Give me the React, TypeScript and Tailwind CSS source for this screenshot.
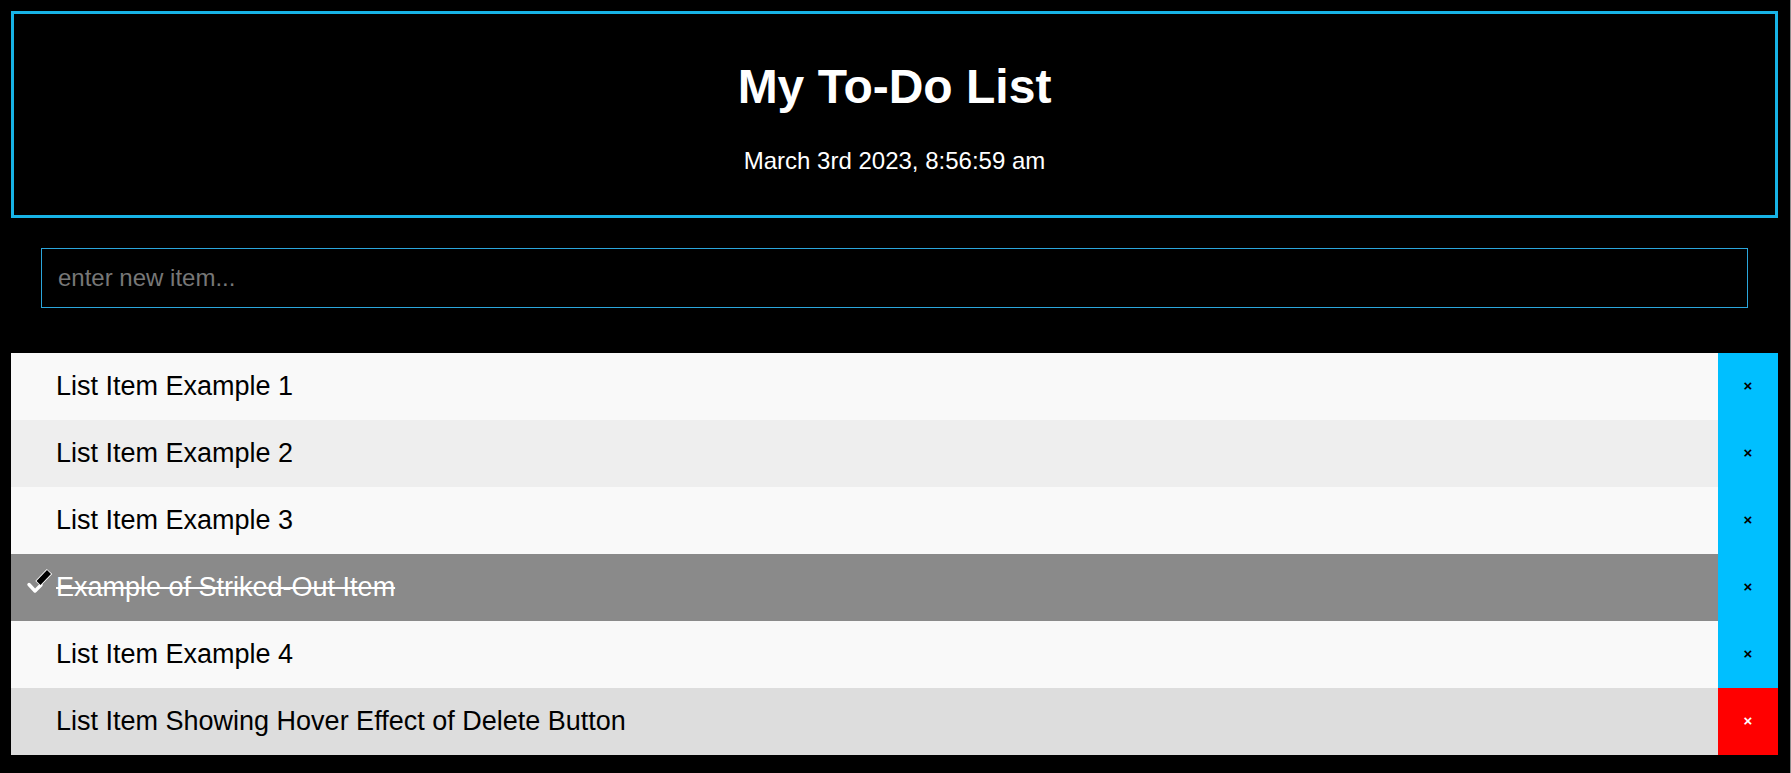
import { useState } from "react"

type Item = { id: number; text: string; done: boolean }

const initialItems: Item[] = [
  { id: 1, text: "List Item Example 1", done: false },
  { id: 2, text: "List Item Example 2", done: false },
  { id: 3, text: "List Item Example 3", done: false },
  { id: 4, text: "Example of Striked-Out Item", done: true },
  { id: 5, text: "List Item Example 4", done: false },
  { id: 6, text: "List Item Showing Hover Effect of Delete Button", done: false },
]

// white tick with a black marker tip, as drawn before a checked item
function CheckIcon() {
  return (
    <svg className="absolute left-[13px] top-[12px]" width="30" height="30" viewBox="0 0 30 30">
      <polyline points="5,18.5 11,25 17,19" fill="none" stroke="#fff" strokeWidth="3.4" strokeLinecap="round" strokeLinejoin="round" />
      <line x1="14" y1="17.5" x2="25.5" y2="5.5" stroke="#fff" strokeWidth="7.5" />
      <line x1="14.5" y1="17" x2="25" y2="6" stroke="#000" strokeWidth="5.5" />
    </svg>
  )
}

export default function App() {
  const [items, setItems] = useState<Item[]>(initialItems)
  const [value, setValue] = useState("")

  const rowBg = (item: Item, index: number) => {
    if (item.done) return "bg-[#8a8a8a]"
    if (index === 5) return "bg-[#dddddd]"
    return index % 2 === 0 ? "bg-[#f9f9f9]" : "bg-[#eeeeee]"
  }

  return (
    <div
      className="min-h-screen bg-black border-r border-[#8c8c8c] pl-[11px] pr-[12px] pt-[11px] pb-[18px]"
      style={{ fontFamily: '"Liberation Sans", Arial, sans-serif' }}
    >
      {/* Header */}
      <div className="border-[3px] border-[#17b3e6] pt-[49px] pb-[42px] text-center text-white">
        <h1 className="text-[48px] leading-[48px] font-bold">My To-Do List</h1>
        <div className="mt-[38px] text-[24px] leading-[24px]">March 3rd 2023, 8:56:59 am</div>
      </div>

      {/* New item */}
      <div className="mx-[30px] mt-[30px]">
        <input
          value={value}
          onChange={(e) => setValue(e.target.value)}
          placeholder="enter new item..."
          className="block h-[60px] w-full border border-[#2ba6dc] bg-black px-4 text-[24px] text-white outline-none placeholder:text-[#777777]"
        />
      </div>

      {/* List */}
      <ul className="mt-[45px]">
        {items.map((item, index) => (
          <li key={item.id} className={`relative flex h-[67px] items-center ${rowBg(item, index)}`}>
            {item.done && <CheckIcon />}
            <span
              className={`flex-1 pl-[45px] text-[27px] leading-none ${
                item.done ? "text-white line-through" : "text-black"
              }`}
            >
              {item.text}
            </span>
            <button
              onClick={() => setItems(items.filter((i) => i.id !== item.id))}
              className={`flex h-full w-[60px] items-center justify-center text-[15px] font-bold ${
                index === 5 ? "bg-[#ff0000] text-white" : "bg-[#00bfff] text-black"
              }`}
            >
              ×
            </button>
          </li>
        ))}
      </ul>
    </div>
  )
}
